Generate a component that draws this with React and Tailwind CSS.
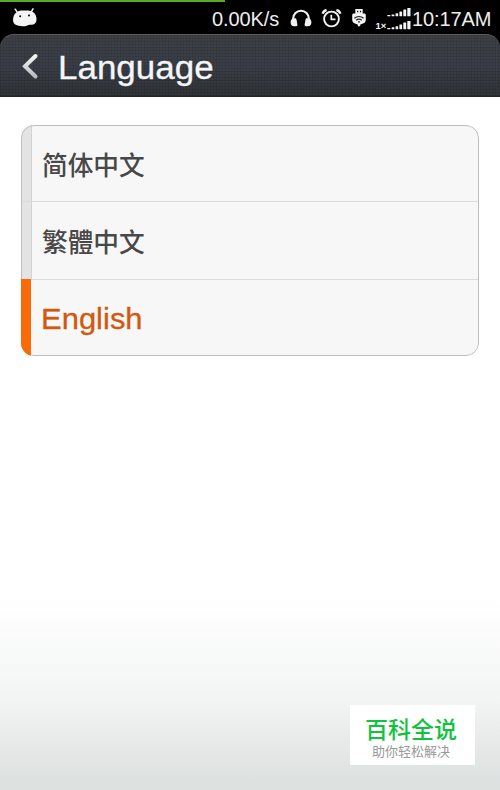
const LANGUAGES = [
  { id: 'zh-CN', label: '简体中文' },
  { id: 'zh-TW', label: '繁體中文' },
  { id: 'en', label: 'English' },
]

// x, height and width of each bar in the signal meter
const SIGNAL_BARS = [
  [12.2, 1.3, 3.2],
  [16.6, 1.9, 2.8],
  [20.6, 3, 2.6],
  [24.4, 4.8, 2.7],
  [28.3, 6.7, 2.9],
  [32.3, 8.2, 3.2],
]

function AndroidIcon() {
  return (
    <svg className="mt-[8px] ml-[12px] h-[19px] w-[26px] shrink-0" viewBox="0 0 26 19" fill="#f4f4f4">
      <path d="M3.2 1.2 6 5.4M21 .9 18.8 4.6" stroke="#f4f4f4" strokeWidth="1.5" strokeLinecap="round" />
      <path d="M5 3.9C7 2.6 9.5 2.5 12 2.6c3 0 6-.3 8.5 1.2 3 1.8 4.3 5 4 8.2-.2 3.2-2.5 5-5.5 4.8-1.5-.1-2.6-.2-3.6.6-2.5 1.1-6.2 1.1-8.8.4C3 17.2 1 15.3 1 12.3 1 8.5 2 5.5 5 3.9Z" />
      <circle cx="8.2" cy="8.3" r="1" fill="#000" />
      <circle cx="17" cy="7.6" r="1" fill="#000" />
    </svg>
  )
}

function HeadphonesIcon() {
  return (
    <svg className="mt-[9px] ml-[10px] h-[18px] w-[22px] shrink-0" viewBox="0 0 22 18" fill="#f2f2f2">
      <path d="M3.2 13V9.5a7.8 7.8 0 0 1 15.6 0V13" fill="none" stroke="#f2f2f2" strokeWidth="2.1" />
      <path d="M2.8 9.5 5 9.2c.8 0 1.3.5 1.5 1.3l.9 5.2c.1.9-.3 1.4-1.2 1.5l-2 .1C1.7 17.3.6 15.5.6 13.2c0-1.7.8-3.1 2.2-3.7ZM19.2 9.5 17 9.2c-.8 0-1.3.5-1.5 1.3l-.9 5.2c-.1.9.3 1.4 1.2 1.5l2 .1c2.5 0 3.6-1.8 3.6-4.1 0-1.7-.8-3.1-2.2-3.7Z" />
    </svg>
  )
}

function AlarmIcon() {
  return (
    <svg className="mt-[9px] ml-[9px] h-[19px] w-[21px] shrink-0" viewBox="0 0 20 19" fill="none" stroke="#f2f2f2">
      <circle cx="10" cy="10" r="7.4" strokeWidth="1.9" />
      <path d="M9.8 5.7v4.6h4.2" strokeWidth="1.7" />
      <path d="M1.2 4.8C1.6 2.9 3 1.5 5.1 1.1M18.8 4.8C18.4 2.9 17 1.5 14.9 1.1" strokeWidth="2.4" />
    </svg>
  )
}

function UsbIcon() {
  return (
    <svg className="mt-[9px] ml-[9px] h-[18px] w-[16px] shrink-0" viewBox="0 0 16 18">
      <path d="M4.3 0h7.4v5H4.3zM2.8 4.5h10.4c1 0 1.6.6 1.6 1.6v4.8c0 1.8-1.5 3.4-3.4 3.9L9.4 15.4 9 17.3H7l-.4-1.9-2-.6c-1.9-.5-3.4-2.1-3.4-3.9V6.1c0-1 .6-1.6 1.6-1.6Z" fill="#f4f4f4" />
      <path d="M6 1.7h1.2v1.5H6zM8.9 1.7h1.2v1.5H8.9z" fill="#111" />
      <path d="M3.4 9.2c2.6-2.3 6.6-2.3 9.2 0M5.3 11.3c1.5-1.4 3.9-1.4 5.4 0" fill="none" stroke="#222" strokeWidth="1.2" />
      <circle cx="8" cy="12.8" r=".9" fill="#222" />
    </svg>
  )
}

function SignalIcon() {
  return (
    <svg className="mt-[8px] ml-[8px] h-[22px] w-[36px] shrink-0" viewBox="0 0 36 22" fill="#f4f4f4">
      {[8.3, 21.2].map((base) => (
        <g key={base}>
          {SIGNAL_BARS.map(([x, h, w]) => (
            <rect key={x} x={x} y={base - h} width={w} height={h} rx=".4" />
          ))}
        </g>
      ))}
      <text x="0.5" y="21" fontFamily="Liberation Sans, sans-serif" fontSize="9.500" fontWeight="700">
        1×
      </text>
    </svg>
  )
}

function StatusBar() {
  return (
    <div className="h-[34px] bg-black">
      <div className="h-[2px] w-[225px] bg-[#57ab2c]" />
      <div className="-mt-[2px] flex h-[34px] items-start text-[20px] leading-[38px] text-[#eeeeee]">
        <AndroidIcon />
        <span className="ml-[174px] w-[68px] tracking-[-0.1px]">0.00K/s</span>
        <HeadphonesIcon />
        <AlarmIcon />
        <UsbIcon />
        <SignalIcon />
        <span className="ml-px tracking-[-0.1px] whitespace-nowrap">10:17AM</span>
      </div>
    </div>
  )
}

function Header() {
  return (
    <div className="bg-black">
      <header className="flex h-[63px] items-center rounded-t-[14px] border-t border-b border-t-[#5b5d60] border-b-[#222427] bg-[repeating-linear-gradient(90deg,#00000014_0_1px,transparent_1px_3px),repeating-linear-gradient(0deg,#00000014_0_1px,transparent_1px_3px),linear-gradient(#3d4145,#393d46_50%,#303336)]">
        <svg className="ml-[21px] h-[28px] w-[18px]" viewBox="0 0 18 28" fill="none">
          <defs>
            <linearGradient id="arrow" x1="0" y1="0" x2="0" y2="1">
              <stop offset="0" stopColor="#f5f5f5" />
              <stop offset="1" stopColor="#b9bcbe" />
            </linearGradient>
          </defs>
          <path d="M14.5 4 4 14.2 14.5 24.5" stroke="url(#arrow)" strokeWidth="4" strokeLinecap="round" strokeLinejoin="miter" />
        </svg>
        <h1 className="ml-[19px] origin-left scale-x-[1.06] pt-[4px] text-[33px] leading-[40px] text-[#f4f5f6] [-webkit-text-stroke:0.3px_#f4f5f6]">
          Language
        </h1>
      </header>
    </div>
  )
}

function LanguageRow({ language, selected }) {
  return (
    <li className="flex flex-1 border-b border-[#dcdcdc] last:border-b-0">
      <span className={selected ? 'z-10 -mt-px w-[10px] bg-[#fb6a09]' : 'w-[11px] border-r border-[#d2d2d2] bg-[#e4e4e4]'} />
      <span
        className={
          selected
            ? 'ml-[10px] origin-left scale-x-[1.05] self-center pt-[3px] text-[29.5px] leading-[36px] text-[#d0590f] [-webkit-text-stroke:0.3px_#d0590f]'
            : 'ml-[10px] self-center pt-[5px] text-[25.7px] leading-[36px] font-medium text-[#484848]'
        }
      >
        {language.label}
      </span>
    </li>
  )
}

function Watermark() {
  return (
    <div className="mr-[25px] mb-[25px] flex h-[60px] w-[125px] flex-col items-center bg-white pt-[12px] pr-[3px]">
      <span className="text-[23px] leading-[27px] font-medium text-[#0fc43c]">百科全说</span>
      <span className="text-[13px] leading-[16px] text-[#999999]">助你轻松解决</span>
    </div>
  )
}

export default function App() {
  return (
    <div className="flex h-[790px] w-[500px] flex-col overflow-hidden bg-[linear-gradient(#ffffff_0,#ffffff_600px,#f3f4f4_700px,#dde1e0_780px,#dde1e0)] font-['Liberation_Sans','Noto_Sans_CJK_SC',sans-serif]">
      <StatusBar />
      <Header />
      {/* the outline is an overlay so that the orange marker can cover it */}
      <ul className="relative isolate mx-[21px] mt-[28px] flex h-[231px] flex-col overflow-hidden rounded-[13px] bg-[#f7f7f7] after:pointer-events-none after:absolute after:inset-0 after:rounded-[13px] after:border after:border-[#bdbdbd]">
        {LANGUAGES.map((language) => (
          <LanguageRow key={language.id} language={language} selected={language.id === 'en'} />
        ))}
      </ul>
      <div className="mt-auto flex justify-end">
        <Watermark />
      </div>
    </div>
  )
}
